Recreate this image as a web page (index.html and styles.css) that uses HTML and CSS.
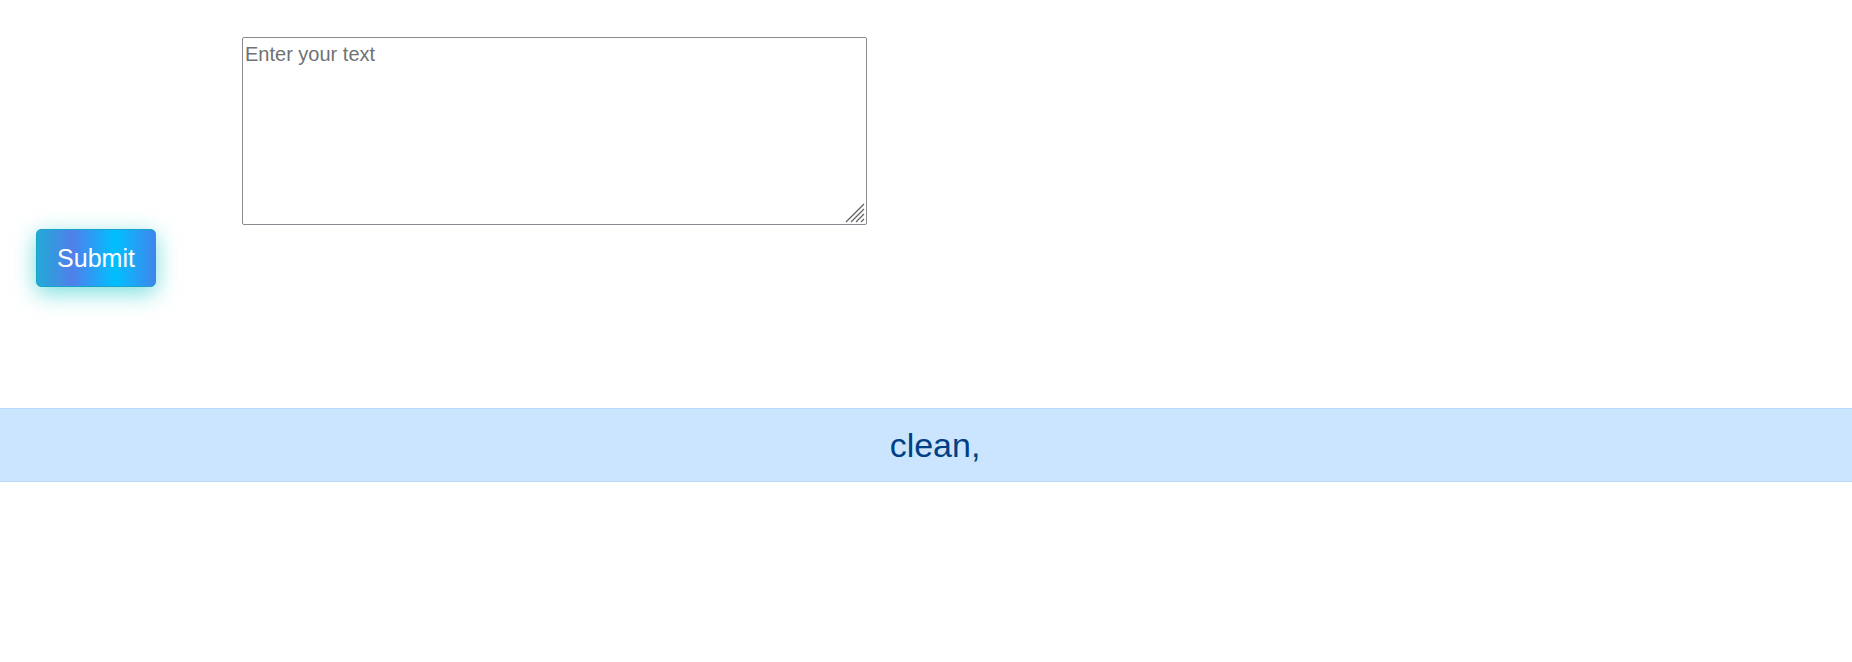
FILE: index.html
```html
<!DOCTYPE html>
<html lang="en">
<head>
<meta charset="utf-8">
<title>Form</title>
<link rel="stylesheet" href="styles.css">
</head>
<body>
<form class="form">
  <div class="field-row">
    <div class="text-wrap">
      <textarea class="text-input" placeholder="Enter your text"></textarea>
      <svg class="grip" width="20" height="20" viewBox="0 0 20 20" aria-hidden="true">
        <path d="M19 1 L1 19 M19 6 L6 19 M19 11 L11 19 M19 16 L16 19" stroke="#5f5f5f" stroke-width="1.2" fill="none"/>
      </svg>
    </div>
  </div>
  <div class="action-row">
    <button type="button" class="submit-btn">Submit</button>
  </div>
</form>
<div class="banner">clean,</div>
</body>
</html>
```
FILE: styles.css
```css
html, body {
  margin: 0;
  padding: 0;
  background: #ffffff;
  font-family: "Liberation Sans", Arial, sans-serif;
  font-size: 20px;
}

.form {
  display: flex;
  flex-direction: column;
  padding-top: 37px;
}

.field-row {
  display: flex;
  padding-left: 242px;
}

.text-wrap {
  position: relative;
  display: flex;
}

.text-input {
  box-sizing: border-box;
  width: 625px;
  height: 188px;
  margin: 0;
  padding: 5px 2px 2px 2px;
  border: 1px solid #8a8a92;
  border-radius: 2px;
  font-family: "Liberation Sans", Arial, sans-serif;
  font-size: 20px;
  line-height: 23px;
  color: #222;
  resize: none;
}

.text-input::placeholder {
  color: #6f7175;
}

.grip {
  position: absolute;
  right: 2px;
  bottom: 2px;
  pointer-events: none;
}

.action-row {
  display: flex;
  padding-left: 36px;
  padding-top: 4px;
}

.submit-btn {
  box-sizing: border-box;
  width: 120px;
  height: 58px;
  padding: 0;
  border: 1px solid #1aa3c6;
  border-radius: 5px;
  background: linear-gradient(to right, #22abd7 0%, #507fea 30%, #00c0ff 66%, #3f86ec 100%);
  color: #ffffff;
  font-family: "Liberation Sans", Arial, sans-serif;
  font-size: 25px;
  box-shadow: 0 6px 22px rgba(30, 200, 200, 0.6);
  cursor: pointer;
}

.banner {
  box-sizing: border-box;
  margin-top: 121px;
  height: 74px;
  display: flex;
  align-items: center;
  justify-content: center;
  padding-left: 18px;
  background: #cce5ff;
  border-top: 1px solid #b8daff;
  border-bottom: 1px solid #b8daff;
  color: #004085;
  font-size: 34px;
}
```
